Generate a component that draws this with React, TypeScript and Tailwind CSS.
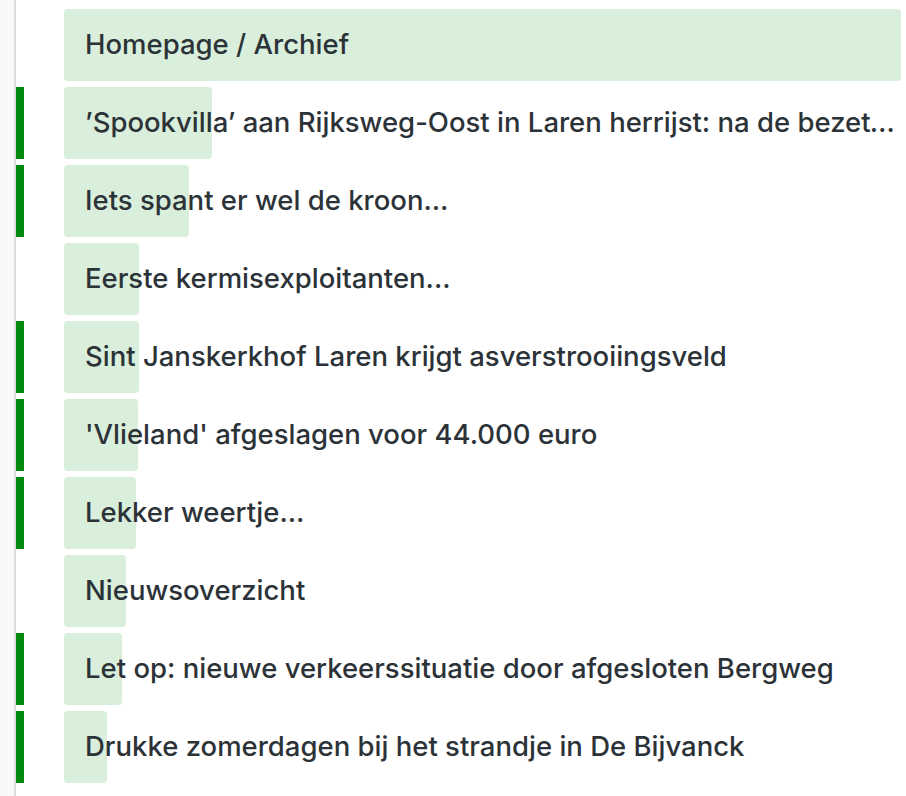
import React from "react";

type Item = {
  title: string;
  marked: boolean;
  progress: number;
};

const items: Item[] = [
  { title: "Homepage / Archief", marked: false, progress: 837 },
  { title: "’Spookvilla’ aan Rijksweg-Oost in Laren herrijst: na de bezetters komen de nieuwe bewoners", marked: true, progress: 148 },
  { title: "Iets spant er wel de kroon...", marked: true, progress: 125 },
  { title: "Eerste kermisexploitanten...", marked: false, progress: 75 },
  { title: "Sint Janskerkhof Laren krijgt asverstrooiingsveld", marked: true, progress: 75 },
  { title: "'Vlieland' afgeslagen voor 44.000 euro", marked: true, progress: 74 },
  { title: "Lekker weertje...", marked: true, progress: 72 },
  { title: "Nieuwsoverzicht", marked: false, progress: 62 },
  { title: "Let op: nieuwe verkeerssituatie door afgesloten Bergweg", marked: true, progress: 58 },
  { title: "Drukke zomerdagen bij het strandje in De Bijvanck", marked: true, progress: 43 },
];

const Row = ({ item }: { item: Item }) => {
  return (
    <div className="flex h-[72px] shrink-0">
      <div className={item.marked ? "w-[8px] bg-[#008a0e]" : "w-[8px]"} />
      <div className="relative ml-[40px] flex flex-1 items-center min-w-0">
        <div
          className="absolute left-0 top-0 h-full rounded-[4px] bg-[#d9eedb]"
          style={{ width: item.progress }}
        />
        <span className="relative truncate pl-[21px] pr-[6px] text-[27.5px] font-medium text-[#2c3338]">
          {item.title}
        </span>
      </div>
    </div>
  );
};

export default function App() {
  return (
    <div
      className="flex h-[796px] w-[906px] overflow-hidden bg-white"
      style={{ fontFamily: "Inter, 'Noto Sans', sans-serif" }}
    >
      <div className="w-[14px] shrink-0 bg-[#f8f8f8]" />
      <div className="w-[2px] shrink-0 bg-[#dcdcdc]" />
      <div className="flex min-w-0 flex-1 flex-col gap-[6px] pt-[9px] pr-[5px]">
        {items.map((item, i) => (
          <Row key={i} item={item} />
        ))}
      </div>
    </div>
  );
}
